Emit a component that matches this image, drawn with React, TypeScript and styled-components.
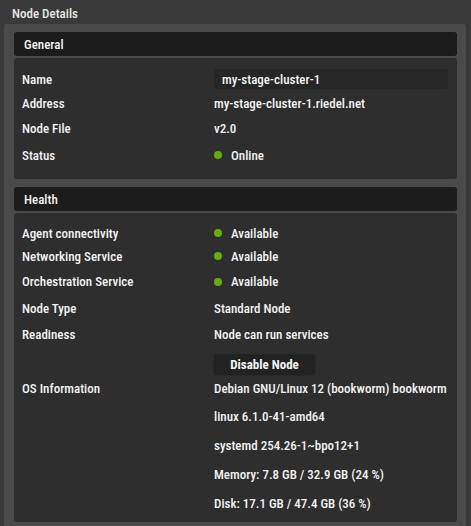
import * as React from 'react';
import styled, { createGlobalStyle } from 'styled-components';

const GlobalStyle = createGlobalStyle`
  html, body {
    margin: 0;
    padding: 0;
    background: #393939;
  }
  body {
    font-family: Roboto, "Noto Sans", sans-serif;
    font-size: 13px;
    font-stretch: 87%;
    color: #f2f2f2;
  }
`;

const Window = styled.div`
  width: 471px;
  height: 526px;
  overflow: hidden;
  background: #393939;
  display: flex;
  flex-direction: column;
`;

const TitleBar = styled.div`
  height: 24px;
  flex: none;
  display: flex;
  align-items: center;
  padding: 2px 0 0 12px;
  box-sizing: border-box;
  font-weight: 500;
  color: #e6e6e6;
`;

const Frame = styled.div`
  flex: 1;
  margin: 0 5px 0 4px;
  padding: 8px 9px 3px 10px;
  background: #4a4a4a;
  border-radius: 3px 3px 0 0;
  display: flex;
  flex-direction: column;
  gap: 8px;
`;

const Section = styled.section`
  display: flex;
  flex-direction: column;
  gap: 2px;
`;

const SectionHeader = styled.div`
  height: 24px;
  display: flex;
  align-items: center;
  padding-left: 10px;
  background: #1c1c1c;
  border-radius: 3px;
  font-weight: 500;
`;

const SectionBody = styled.div<{ $padTop: number; $padBottom: number }>`
  background: #2e2e2e;
  border-radius: 3px;
  padding: ${({ $padTop }) => $padTop}px 9px ${({ $padBottom }) => $padBottom}px 8px;
  display: flex;
  flex-direction: column;
`;

const Row = styled.div<{ $h?: number }>`
  display: grid;
  grid-template-columns: 192px 1fr;
  align-items: ${({ $h }) => ($h ? 'center' : 'start')};
  ${({ $h }) => ($h ? `height: ${$h}px;` : '')}
  font-weight: 500;
`;

const Label = styled.div`
  white-space: nowrap;
`;

const Value = styled.div`
  display: flex;
  align-items: center;
  white-space: nowrap;
`;

const Field = styled.div`
  height: 20px;
  display: flex;
  align-items: center;
  padding-left: 8px;
  background: #262626;
  border-radius: 3px;
`;

const Dot = styled.span`
  width: 8px;
  height: 8px;
  border-radius: 50%;
  background: #67ab0c;
  margin: 0 9px 0 0;
  flex: none;
`;

const Button = styled.button`
  margin-top: 7px;
  width: 101px;
  height: 20px;
  border: none;
  border-radius: 3px;
  background: #222222;
  box-shadow: 0 1px 2px rgba(0, 0, 0, 0.35);
  color: #f2f2f2;
  font-family: inherit;
  font-size: 13px;
  font-stretch: inherit;
  font-weight: 700;
  padding: 0;
  cursor: pointer;
`;

const Lines = styled.div`
  display: flex;
  flex-direction: column;
`;

const Line = styled.div<{ $h: number }>`
  height: ${({ $h }) => $h}px;
  display: flex;
  align-items: center;
  white-space: nowrap;
`;

const Status: React.FC<{ text: string }> = ({ text }) => (
  <Value>
    <Dot />
    {text}
  </Value>
);

const osInfo = [
  'Debian GNU/Linux 12 (bookworm) bookworm',
  'linux 6.1.0-41-amd64',
  'systemd 254.26-1~bpo12+1',
  'Memory: 7.8 GB / 32.9 GB (24 %)',
  'Disk: 17.1 GB / 47.4 GB (36 %)',
];

export default function App() {
  return (
    <Window>
      <GlobalStyle />
      <TitleBar>Node Details</TitleBar>
      <Frame>
        <Section>
          <SectionHeader>General</SectionHeader>
          <SectionBody $padTop={8} $padBottom={11}>
            <Row $h={26}>
              <Label>Name</Label>
              <Field>my-stage-cluster-1</Field>
            </Row>
            <Row $h={23}>
              <Label>Address</Label>
              <Value>my-stage-cluster-1.riedel.net</Value>
            </Row>
            <Row $h={27}>
              <Label>Node File</Label>
              <Value>v2.0</Value>
            </Row>
            <Row $h={26}>
              <Label>Status</Label>
              <Status text="Online" />
            </Row>
          </SectionBody>
        </Section>
        <Section>
          <SectionHeader>Health</SectionHeader>
          <SectionBody $padTop={9} $padBottom={4}>
            <Row $h={22}>
              <Label>Agent connectivity</Label>
              <Status text="Available" />
            </Row>
            <Row $h={24}>
              <Label>Networking Service</Label>
              <Status text="Available" />
            </Row>
            <Row $h={27}>
              <Label>Orchestration Service</Label>
              <Status text="Available" />
            </Row>
            <Row $h={26}>
              <Label>Node Type</Label>
              <Value>Standard Node</Value>
            </Row>
            <Row $h={26}>
              <Label>Readiness</Label>
              <Value>Node can run services</Value>
            </Row>
            <Row>
              <Label />
              <div>
                <Button>Disable Node</Button>
              </div>
            </Row>
            <Row>
              <Line $h={28}>OS Information</Line>
              <Lines>
                {osInfo.map((text, i) => (
                  <Line key={text} $h={i === 0 ? 28 : 29}>
                    {text}
                  </Line>
                ))}
              </Lines>
            </Row>
          </SectionBody>
        </Section>
      </Frame>
    </Window>
  );
}
